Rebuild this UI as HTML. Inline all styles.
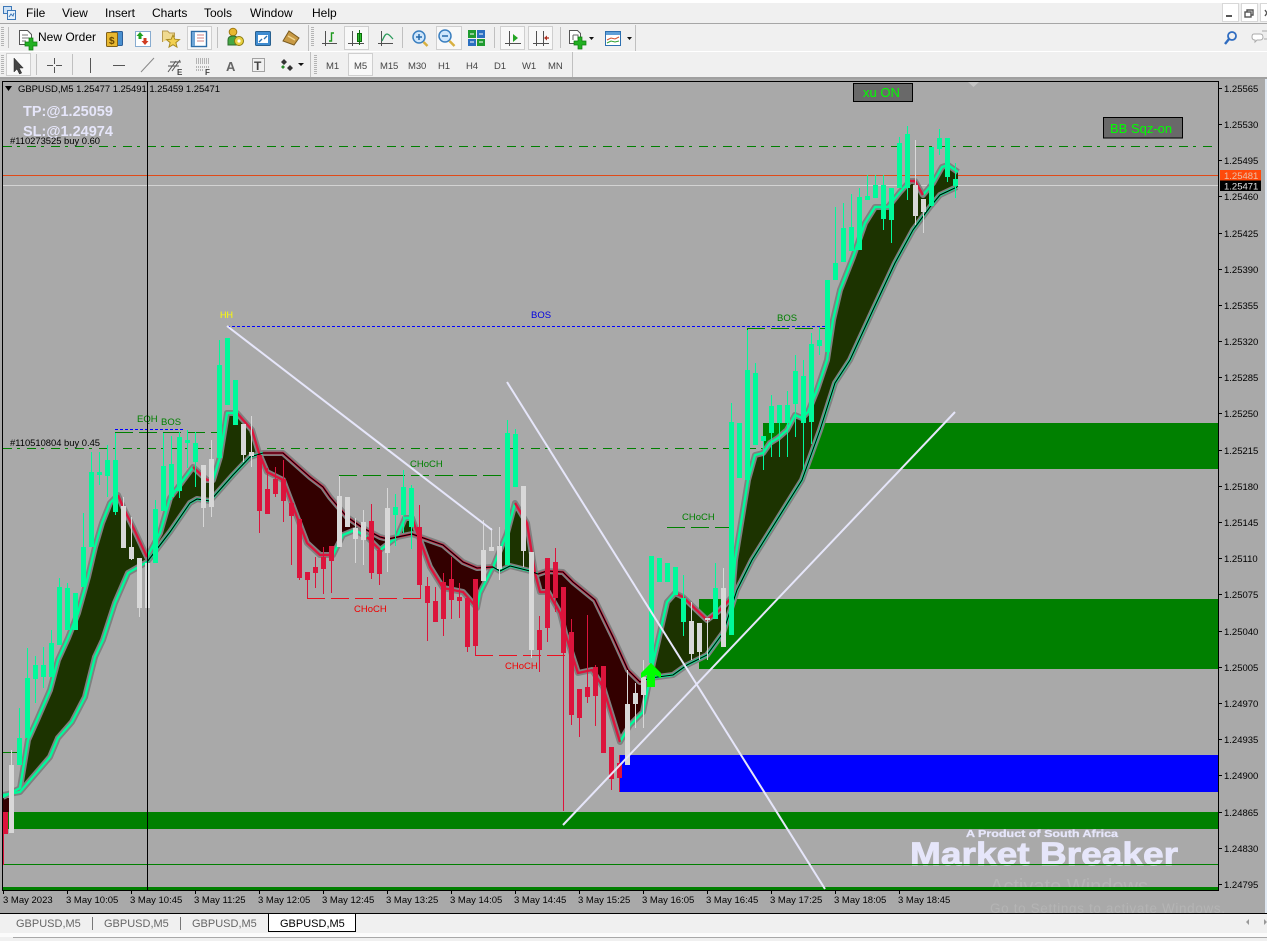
<!DOCTYPE html>
<html><head><meta charset="utf-8"><title>GBPUSD,M5</title>
<style>
html,body{margin:0;padding:0;background:#f0f0f0;width:1267px;height:941px;overflow:hidden}
svg{display:block;position:absolute;left:0;top:0}
text{font-family:"Liberation Sans",Arial,sans-serif}
.m{font-size:12px;fill:#000}
.tf{font-size:9.5px;fill:#444;letter-spacing:-.1px}
.ax{font-size:9.5px;fill:#000}
.tb{font-size:11px;fill:#666}
.g{font-size:9.5px;fill:#008000}
.r{font-size:9.5px;fill:#f00000}
</style></head><body>
<svg width="1267" height="941" viewBox="0 0 1267 941" xmlns="http://www.w3.org/2000/svg">
<defs><clipPath id="c1"><rect x="900" y="870" width="340" height="17"/></clipPath><clipPath id="c2"><rect x="900" y="895" width="340" height="18"/></clipPath></defs>
<!-- chrome -->
<rect width="1267" height="941" fill="#f0f0f0"/>
<rect width="1267" height="3" fill="#fff"/>
<rect y="23" width="1267" height="1" fill="#a6a6a6"/>
<rect y="51" width="1267" height="1" fill="#fff"/>
<rect y="77" width="1267" height="2" fill="#a0a0a0"/>
<rect x="0" y="79" width="1265" height="834" fill="#a9a9a9"/>
<rect x="1265" y="79" width="2" height="834" fill="#dfe8f2"/>
<!-- menu -->
<g fill="none" stroke="#3d78b8"><rect x="3.500" y="6.500" width="8" height="7" fill="#cfe2f5"/><rect x="7.500" y="10.500" width="8" height="9" fill="#e8f2fb"/><path d="M9 17l2-3 2 2 1-3"/></g>
<text class="m" x="26" y="17">File</text><text class="m" x="62" y="17">View</text><text class="m" x="105" y="17">Insert</text><text class="m" x="152" y="17">Charts</text><text class="m" x="204" y="17">Tools</text><text class="m" x="250" y="17">Window</text><text class="m" x="312" y="17">Help</text>
<g fill="#fff" stroke="#d8d8d8"><rect x="1222.500" y="3.500" width="16" height="18"/><rect x="1241.500" y="3.500" width="16" height="18"/><rect x="1260.500" y="3.500" width="10" height="18"/></g>
<rect x="1226" y="15" width="6" height="2" fill="#555"/>
<g fill="none" stroke="#555" stroke-width="1.400"><rect x="1245" y="12" width="6" height="5"/><path d="M1247 12v-2h6v5h-2"/><path d="M1265 10l4 6m0-6l-4 6"/></g>
<!-- grips + separators -->
<g fill="none" stroke="#b4b4b4" stroke-dasharray="1 1"><path d="M0 28.500h4M0 55.500h4" stroke-dasharray="none" opacity="0"/><path d="M2.500 27v20" stroke-width="3"/><path d="M2.500 55v19" stroke-width="3"/><path d="M312.500 27v20" stroke-width="3"/><path d="M315.500 55v19" stroke-width="3"/></g>
<g fill="#c0c0c0"><rect x="8" y="27" width="1" height="21"/><rect x="217" y="27" width="1" height="21"/><rect x="308" y="25" width="1" height="26"/><rect x="402" y="27" width="1" height="21"/><rect x="494" y="27" width="1" height="21"/><rect x="560" y="27" width="1" height="21"/><rect x="635" y="25" width="1" height="26"/><rect x="36" y="54" width="1" height="21"/><rect x="72" y="54" width="1" height="21"/><rect x="310" y="52" width="1" height="25"/><rect x="572" y="52" width="1" height="25"/></g>
<!-- selected boxes -->
<g fill="#f8f8f8" stroke="#cfcfcf"><rect x="187.500" y="26.500" width="24" height="23"/><rect x="344.500" y="26.500" width="24" height="23"/><rect x="436.500" y="26.500" width="25" height="23"/><rect x="500.500" y="26.500" width="24" height="23"/><rect x="528.500" y="26.500" width="24" height="23"/><rect x="6.500" y="53.500" width="24" height="22"/><rect x="348.500" y="53.500" width="24" height="22"/></g>
<!-- new order -->
<path d="M19.500 30.500h8l4 4v10h-12z" fill="#fff" stroke="#555"/><path d="M22 35h6M22 38h7M22 41h4" stroke="#777"/><path d="M25 42h4v-4h4v4h4v4h-4v4h-4v-4h-4z" fill="#22b022" stroke="#0f7a0f" stroke-width=".7"/>
<text class="m" x="38" y="41">New Order</text>
<!-- row-1 icons -->
<rect x="111.500" y="31.500" width="11" height="14" rx="1" fill="#4a90d0" stroke="#2c5f99"/><rect x="106.500" y="32.500" width="11" height="14" rx="1" fill="#e8b830" stroke="#80601a"/><text x="109" y="44" style="font-size:10px;font-weight:bold" fill="#6a4800">$</text>
<rect x="135.500" y="31.500" width="15" height="15" fill="#fff" stroke="#88acd0"/><path d="M140 32l3.500 4h-2v3h-3v-3h-2z" fill="#1fa01f"/><path d="M145 45l-3.500-4h2v-3h3v3h2z" fill="#d03a20"/>
<path d="M162.500 42v-11h5l2 2h5v4" fill="#f0da90" stroke="#b89a50"/><path d="M173 35l1.800 4.200 4.700.4-3.600 3 1.100 4.500-4-2.400-4 2.400 1.100-4.500-3.600-3 4.700-.4z" fill="#f2d050" stroke="#a88a20"/>
<rect x="191.500" y="31.500" width="15" height="15" fill="#fff" stroke="#2e6ea8" stroke-width="1.400"/><rect x="192" y="32" width="3" height="14" fill="#6fa5d6"/><path d="M197 35h7M197 38h7M197 41h7" stroke="#d08080"/>
<circle cx="233" cy="32" r="3.800" fill="#e8b830" stroke="#a07810"/><path d="M228 45v-5c0-3 2-4 5-4 3 0 5 1 5 4v5z" fill="#45a845" stroke="#2a6a2a"/><circle cx="239" cy="41" r="4.500" fill="#e8d040" stroke="#8a7a10"/><circle cx="239" cy="41" r="1.600" fill="#fff"/>
<rect x="255.500" y="31.500" width="15" height="14" rx="1" fill="#3e8bd0" stroke="#28608f"/><rect x="258" y="35" width="10" height="8" fill="#fff"/><path d="M259 42l3-3M267 36l-3 3" stroke="#2a70b0" stroke-width="1.400"/>
<path d="M283 41l6-10 10 7-5 7z" fill="#c89a45" stroke="#7a5b20"/><path d="M288 36l7 4" stroke="#f0d490" stroke-width="1.500"/>
<!-- chart type -->
<g fill="none" stroke="#505050"><path d="M325.500 31v15M322 43.500h15"/><path d="M352.500 31v15M348 43.500h16"/><path d="M381.500 31v15M378 43.500h15"/></g>
<path d="M329 41h2.500v-8H334" fill="none" stroke="#1d9a1d" stroke-width="1.400"/>
<rect x="357.500" y="33.500" width="4" height="8" fill="#30c030" stroke="#0b6b0b"/><path d="M359.500 30v15" stroke="#0b6b0b"/>
<path d="M382 41c2-4 3-7 5-7s4 3 6 5" fill="none" stroke="#2a9a5a" stroke-width="1.300"/>
<circle cx="419" cy="37" r="6" fill="#cfe6fb" stroke="#3a7fc0" stroke-width="1.500"/><path d="M416 37h6M419 34v6" stroke="#2468aa" stroke-width="1.500"/><path d="M423.500 42l4 4" stroke="#d8b040" stroke-width="2.500"/>
<circle cx="445" cy="36" r="6" fill="#cfe6fb" stroke="#3a7fc0" stroke-width="1.500"/><path d="M442 36h6" stroke="#2468aa" stroke-width="1.500"/><path d="M449.500 41l5 5" stroke="#d8b040" stroke-width="2.500"/>
<rect x="468" y="30" width="8" height="8" fill="#1f9b30"/><rect x="477" y="30" width="8" height="8" fill="#2b6fc0"/><rect x="468" y="39" width="8" height="7" fill="#2b6fc0"/><rect x="477" y="39" width="8" height="7" fill="#1f9b30"/><path d="M470 34h4M479 34h4M470 42h4M479 42h4" stroke="#fff"/>
<g fill="none" stroke="#505050"><path d="M509.500 31v15M505 43.500h16"/><path d="M536.500 31v15M533 43.500h16M543.500 31v15"/></g><path d="M513 34l5 4-5 4z" fill="#23a523"/><path d="M545 38h4" stroke="#b03020" stroke-width="1.300"/><path d="M544 38l3-2.500v5z" fill="#b03020"/>
<path d="M569.500 30.500h8l3 3v10h-11z" fill="#fff" stroke="#555"/><path d="M573 35h5v4M573 35v5" stroke="#666" fill="none"/><path d="M574 41h4v-4h4v4h4v4h-4v4h-4v-4h-4z" fill="#22b022" stroke="#0f7a0f" stroke-width=".7"/><path d="M589 37h5l-2.500 3z" fill="#111"/>
<rect x="605.500" y="31.500" width="15" height="14" fill="#fff" stroke="#2c6fb0"/><rect x="606" y="32" width="14" height="3" fill="#5f9fd8"/><path d="M607 40l4-2 4 1 4-2" stroke="#d05030" fill="none"/><path d="M607 43l4-2 4 1 4-1" stroke="#30a030" fill="none"/><path d="M627 37h5l-2.500 3z" fill="#111"/>
<circle cx="1232" cy="36" r="4" fill="none" stroke="#2f6cc0" stroke-width="1.800"/><path d="M1229 39l-4 5" stroke="#2f6cc0" stroke-width="2.400"/>
<path d="M1254 34h6c2 0 3 1 3 3s-1 3-3 3h-3l-2 2v-2c-2 0-3-1-3-3s1-3 2-3z" fill="#fff" stroke="#aaa"/><path d="M1262 31h6v8h-4" fill="#eee" stroke="#aaa"/>
<!-- row-2 icons -->
<path d="M14 58v14l3-3 2.500 5 2.200-1-2.500-5h4z" fill="#444" stroke="#222" stroke-width=".5"/>
<path d="M54.500 58v6M54.500 67v6M47 65.500h6M56 65.500h6" stroke="#555"/>
<path d="M90.500 58v15M113 65.500h12" stroke="#555"/><path d="M141 72l13-14" stroke="#888"/>
<g stroke="#555" fill="none"><path d="M168 72l8-11M172 71l8-11M168 66h11M170 62h11"/></g><text x="177" y="75" style="font-size:8px;font-weight:bold" fill="#444">E</text>
<path d="M196 59h13M196 61h13M196 63h13M196 67h13M196 70h8" stroke="#777" stroke-dasharray="1 1"/><text x="205" y="75" style="font-size:8px;font-weight:bold" fill="#444">F</text>
<text x="226" y="71" style="font-size:13px;font-weight:bold" fill="#666">A</text>
<rect x="252.500" y="58.500" width="12" height="13" fill="none" stroke="#555" stroke-dasharray="1 1"/><text x="254" y="70" style="font-size:12px;font-weight:bold" fill="#444">T</text>
<path d="M284 59l3 3-3 3-3-3zM290 65l3 3-3 3-3-3z" fill="#333"/><path d="M281 67l2 2 2-2-2-2z" fill="#2a8a2a"/><path d="M298 63h6l-3 3z" fill="#111"/>
<text class="tf" x="326" y="69">M1</text><text class="tf" x="354" y="69">M5</text><text class="tf" x="380" y="69">M15</text><text class="tf" x="408" y="69">M30</text><text class="tf" x="438" y="69">H1</text><text class="tf" x="466" y="69">H4</text><text class="tf" x="494" y="69">D1</text><text class="tf" x="522" y="69">W1</text><text class="tf" x="548" y="69">MN</text>

<!-- watermark behind -->
<text x="990" y="893" clip-path="url(#c1)" style="font-size:20px" fill="#b4b4b4" textLength="158">Activate Windows</text>
<text x="990" y="913" clip-path="url(#c2)" style="font-size:13.500px" fill="#b4b4b4" textLength="235">Go to Settings to activate Windows.</text>

<!-- zones -->
<g shape-rendering="crispEdges">
<rect x="3" y="812" width="1215" height="17" fill="#008000"/>
<rect x="3" y="887" width="1215" height="3" fill="#008000"/>
<rect x="763" y="423" width="455" height="46" fill="#008000"/>
<rect x="699" y="599" width="519" height="70" fill="#008000"/>
<rect x="620" y="755" width="598" height="37" fill="#0000ff"/>
<path d="M619.500 755v37" stroke="#dc143c"/>
<path d="M3 864.500h1215" stroke="#008000"/>
<path d="M3 752.500h16" stroke="#008000"/>
<path d="M3 146.500h1210M3 448.500h1215" stroke="#008000" stroke-dasharray="9 5 3 7"/>
<path d="M3 175.500h1215" stroke="#e04a18"/>
<path d="M3 185.500h1215" stroke="#d3d3d3"/>
<!-- structure lines -->
<path d="M115 432.500h103M339 475.500h162M747 328.500h80M667 527.500h64" stroke="#008000" stroke-dasharray="18 6"/>
<path d="M115.500 432v28M339.500 475v21M747.500 328v42" stroke="#008000"/>
<path d="M115 429.500h70M227 326.500h608" stroke="#0000ff" stroke-dasharray="3 2"/>
<path d="M307 598.500h114M475 655.500h90" stroke="#ec1020" stroke-dasharray="18 6"/>
<path d="M307.500 573v25M420.500 527v71M475.500 646v10" stroke="#dc143c"/>
</g>

<!-- band fill -->
<rect x="3" y="798" width="9" height="14" fill="#330000"/>
<g fill="#1c3300">
<polygon points="20,788 28,740 37,720 50,690 58,660 68,638 78,613 88,577 95,547 102,523 110,503 118,495 123,507 133,527 147,557 147,562 128,573 115,603 103,640 95,657 85,697 72,722 58,738 50,757 20,792"/>
<polygon points="147,560 160,533 170,498 193,467 207,480 213,480 220,457 227,413 237,413 252,430 259,453 250,457 233,475 210,501 197,499 190,503 170,532"/>
<polygon points="397,537 405,518 412,518 417,535 412,534"/>
<polygon points="485,568 493,567 507,533 515,503 527,523 535,573 530,571 510,566 500,571"/>
<polygon points="645,680 653,663 667,602 675,593 683,597 707,620 720,610 732,597 735,560 748,480 755,455 763,453 770,443 778,438 787,430 795,415 802,418 808,412 817,390 827,360 833,320 840,290 853,257 865,223 875,207 888,207 900,192 910,181 915,181 923,195 933,183 942,167 948,165 958,172 958,187 940,195 930,207 913,230 895,263 873,310 850,360 835,383 820,430 802,480 752,560 737,590 723,633 707,655 687,665 673,675 650,678"/>
</g>
<g fill="#330000">
<polygon points="259,453 263,453 283,453 310,477 323,487 330,497 347,517 363,528 380,537 388,539 397,537 380,550 367,537 355,530 343,535 333,555 320,555 307,543 297,517 283,480 267,472"/>
<polygon points="417,535 443,545 463,562 477,568 485,568 480,593 477,608 463,592 443,588 430,567 420,540"/>
<polygon points="535,573 547,571 563,572 573,582 595,600 613,637 628,670 640,682 645,680 643,712 630,725 620,742 603,687 592,670 578,673 565,633 560,613 548,592 540,592"/>
</g>
<!-- gray halos -->
<g fill="none" stroke="#808080" stroke-width="6" stroke-linejoin="round">
<polyline points="3,797 20,788 28,740 37,720 50,690 58,660 68,638 78,613 88,577 95,547 102,523 110,503 118,495 123,507 133,527 147,557 160,533 170,498 193,467 207,480 213,480 220,457 227,413 237,413 252,430 259,453 267,472 283,480 297,517 307,543 320,555 333,555 343,535 355,530 367,537 380,550 397,537 405,518 412,518 420,540 430,567 443,588 463,592 477,608 480,593 493,567 507,533 515,503 527,523 535,573 540,592 548,592 560,613 565,633 578,673 592,670 603,687 620,742 630,725 643,712 653,663 667,602 675,593 683,597 707,620 720,610 732,597 735,560 748,480 755,455 763,453 770,443 778,438 787,430 795,415 802,418 808,412 817,390 827,360 833,320 840,290 853,257 865,223 875,207 888,207 900,192 910,181 915,181 923,195 933,183 942,167 948,165 958,172"/>
<polyline points="3,795 20,792 50,757 58,738 72,722 85,697 95,657 103,640 115,603 128,573 147,562 170,532 190,503 197,499 210,501 233,475 250,457 263,453 283,453 310,477 323,487 330,497 347,517 363,528 380,537 388,539 412,534 443,545 463,562 477,568 493,567 500,571 510,566 530,571 538,574 547,571 563,572 573,582 595,600 613,637 628,670 640,682 650,678 673,675 687,665 707,655 723,633 737,590 752,560 802,480 820,430 835,383 850,360 873,310 895,263 913,230 930,207 940,195 957,187"/>
</g>
<!-- coloured lines -->
<g fill="none" stroke-width="2.400" stroke-linejoin="round">
<g stroke="#00fa9a">
<polyline points="3,797 20,788 28,740 37,720 50,690 58,660 68,638 78,613 88,577 95,547 102,523 110,503 118,495"/>
<polyline points="147,557 160,533 170,498 193,467"/>
<polyline points="213,480 220,457 227,413 237,413"/>
<polyline points="333,555 343,535 355,530 367,537"/><polyline points="380,550 397,537 405,518 412,518"/>
<polyline points="477,608 480,593 493,567 507,533 515,503"/>
<polyline points="620,742 630,725 643,712 653,663 667,602 675,593"/>
<polyline points="732,597 735,560 748,480 755,455 763,453 770,443 778,438 787,430 795,415 802,418 808,412 817,390 827,360 833,320 840,290 853,257 865,223 875,207 888,207 900,192 910,181"/>
<polyline points="923,195 933,183 942,167 948,165 958,172"/>
<polyline points="3,795 20,792 50,757 58,738 72,722 85,697 95,657 103,640 115,603 128,573 147,562 170,532 190,503 197,499 210,501 233,475 250,457 263,453"/>
<polyline points="493,567 500,571 510,566 530,571 538,574"/>
<polyline points="645,680 650,678 673,675 687,665 707,655 723,633 737,590 752,560 802,480 820,430 835,383 850,360 873,310 895,263 913,230 930,207 940,195 957,187"/>
</g>
<g stroke="#dc143c">
<polyline points="118,495 123,507 133,527 147,557"/>
<polyline points="193,467 207,480 213,480"/>
<polyline points="237,413 252,430 259,453 267,472 283,480 297,517 307,543 320,555 333,555"/>
<polyline points="367,537 380,550"/>
<polyline points="412,518 420,540 430,567 443,588 463,592 477,608"/>
<polyline points="515,503 527,523 535,573 540,592 548,592 560,613 565,633 578,673 592,670 603,687 620,742"/>
<polyline points="675,593 683,597 707,620 720,610 732,597"/>
<polyline points="910,181 915,181 923,195"/>
<polyline points="263,453 283,453 310,477 323,487 330,497 347,517 363,528 380,537 388,539 412,534 443,545 463,562 477,568 493,567"/>
<polyline points="538,574 547,571 563,572 573,582 595,600 613,637 628,670 640,682 645,680"/>
</g>
</g>
<polyline fill="none" stroke="#000" stroke-width="1.100" points="147,562 170,532 190,503 197,499 210,501 233,475 250,457 263,453 283,453 310,477 323,487 330,497 347,517 363,528 380,537 388,539 412,534 443,545 463,562 477,568 493,567 500,571 510,566 530,571 538,574 547,571 563,572 573,582 595,600 613,637 628,670 640,682 650,678 673,675 687,665 707,655 723,633 737,590 752,560 802,480 820,430 835,383 850,360 873,310 895,263 913,230 930,207 940,195 957,187"/>

<!-- candles: x is candle centre -->
<g fill="none" shape-rendering="crispEdges" transform="translate(.5,0)">
<path stroke="#00fa9a" d="M19 708V765M27 648V678M35 656V703M43 647V688M51 630V643M59 578V587M67 583V590M83 513V547M91 452V472M99 452V485M107 445V497M115 433V515M155 500V510M163 433V466M171 436V500M179 432V498M187 430V468M195 432V487M219 340V365M395 494V546M403 470V533M411 485V549M507 420V433M515 429V434M683 575V636M715 563V588M731 403V422M747 330V370M755 363V373M763 436V470M771 395V457M779 405V457M787 391V457M795 355V437M803 360V470M811 333V444M819 327V355M835 207V263M843 203V228M851 194V227M859 188V197M867 175V196M875 175V185M883 175V230M891 188V243M899 137V143M907 126V200M939 129V155M947 138V182M955 163V198"/>
<path stroke="#d8d8d8" d="M11 750V765M123 497V506M131 517V560M139 558V617M147 517V563M203 465V527M211 440V517M243 424V462M251 416V467M339 476V547M355 518V563M363 510V565M387 488V572M483 520V550M491 528V547M499 527V580M523 486V567M531 552V658M627 670V704M635 683V728M643 660V728M691 602V660M699 623V660M707 618V660M723 568V647M915 140V225M923 199V233"/>
<path stroke="#dc143c" d="M3 834V865M259 511V533M267 468V489M275 467V497M283 460V522M291 516V565M299 578V580M307 580V598M315 557V588M323 547V594M331 561V593M371 504V579M379 574V585M419 505V585M427 577V641M435 587V612M443 573V636M451 557V619M459 583V618M467 598V652M475 579V655M539 616V672M547 558V642M555 548V612M563 587V811M571 619V725M579 689V737M587 615V703M595 665V726M611 747V790M619 763V792"/>
<path stroke="#dc143c" stroke-width="5" d="M5 812V834M259 455V511M267 489V514M275 479V494M283 479V501M291 503V516M299 519V578M307 572V580M315 567V573M323 557V569M331 546V561M371 521V573M379 550V574M419 527V585M427 586V603M435 601V622M443 582V619M451 579V600M459 597V601M467 598V647M475 579V646M539 630V650M547 558V628M555 562V598M563 587V653M571 632V715M579 689V718M587 687V697M595 667V696M603 666V753M611 747V779M619 763V778"/>
<path stroke="#d8d8d8" stroke-width="5" d="M11 765V833M123 506V548M131 547V559M139 558V608M147 563V608M203 465V508M211 459V507M243 424V455M251 452V456M339 496V547M347 497V527M355 528V539M363 522V540M387 508V553M483 550V581M491 547V551M499 546V569M523 486V551M531 552V650M627 704V765M635 693V704M643 677V695M691 621V654M699 623V652M707 618V620M723 588V647M915 185V216M923 199V212"/>
<path stroke="#00fa9a" stroke-width="5" d="M19 738V765M27 678V738M35 665V679M43 665V677M51 643V677M59 587V645M67 588V630M75 593V630M83 547V587M91 472V547M99 472V475M107 460V476M115 460V512M155 509V563M163 466V511M171 464V497M179 437V491M187 440V443M195 443V462M219 365V458M227 338V405M235 380V425M395 507V515M403 487V515M411 488V527M507 433V565M515 434V487M651 556V663M659 558V582M667 563V582M675 567V595M683 598V622M715 588V619M731 422V635M739 423V478M747 370V480M755 373V445M763 436V441M771 406V433M779 405V423M787 405V423M795 371V404M803 376V423M811 344V422M819 340V346M827 280V352M835 263V280M843 228V262M851 227V251M859 197V250M867 196V200M875 185V198M883 185V219M891 188V220M899 143V188M907 134V188M931 147V206M939 138V149M947 138V177M955 179V186"/>
</g>

<!-- trend lines -->
<g stroke="#e6e6fa" stroke-width="2" fill="none">
<path d="M227 326L492 530"/>
<path d="M507 382L825 889"/>
<path d="M563 825L955 412"/>
</g>
<!-- arrow -->
<path d="M651 663L641 673V678L647 675V687H655V675L661 678V673Z" fill="#00ff00"/>

<!-- chart labels -->
<text x="220" y="318" style="font-size:9px" fill="#ffff00">HH</text>
<text class="g" x="137" y="422">EQH</text><text class="g" x="161" y="425">BOS</text>
<text x="531" y="318" style="font-size:9.500px" fill="#0000e0">BOS</text>
<text class="g" x="777" y="321">BOS</text>
<text class="g" x="410" y="467">CHoCH</text>
<text class="g" x="682" y="520">CHoCH</text>
<text class="r" x="354" y="612">CHoCH</text>
<text class="r" x="505" y="669">CHoCH</text>
<path d="M5 86h7l-3.500 5z" fill="#000"/>
<text x="18" y="92" style="font-size:9.500px" fill="#000" textLength="202" lengthAdjust="spacing">GBPUSD,M5  1.25477 1.25491 1.25459 1.25471</text>
<text x="23" y="116" style="font-size:14.500px;font-weight:bold" fill="#e6e6fa">TP:@1.25059</text>
<text x="23" y="136" style="font-size:14.500px;font-weight:bold" fill="#e6e6fa">SL:@1.24974</text>
<text x="10" y="144" style="font-size:9.400px" fill="#000">#110273525 buy 0.60</text>
<text x="10" y="446" style="font-size:9.400px" fill="#000">#110510804 buy 0.45</text>
<!-- buttons -->
<rect x="853.500" y="83.500" width="59" height="18" fill="#696969" stroke="#000"/>
<text x="863" y="97" style="font-size:13px" fill="#00ff00">xu ON</text>
<rect x="1103.500" y="117.500" width="79" height="20.500" fill="#696969" stroke="#000"/>
<text x="1110" y="133" style="font-size:13px" fill="#00ff00">BB Sqz-on</text>
<path d="M968 82h11l-5.500 5z" fill="#c4c4c4"/>
<!-- logo text -->
<text x="966" y="837" style="font-size:10.500px;font-weight:bold" fill="#e6e6fa" stroke="#e6e6fa" stroke-width=".3" textLength="152" lengthAdjust="spacingAndGlyphs">A Product of South Africa</text>
<text x="910" y="865" style="font-size:32px;font-weight:bold" fill="#e6e6fa" stroke="#e6e6fa" stroke-width=".8" textLength="268" lengthAdjust="spacingAndGlyphs">Market Breaker</text>
<path d="M910 864.500h308" stroke="#008000" shape-rendering="crispEdges"/>

<!-- frame -->
<g fill="#000" shape-rendering="crispEdges">
<rect x="2" y="81" width="1217" height="1"/>
<rect x="2" y="81" width="1" height="809"/>
<rect x="1218" y="81" width="1" height="809"/>
<rect x="2" y="890" width="1217" height="1"/>
<rect x="147" y="81" width="1" height="809"/>
</g>
<!-- price axis -->
<g fill="#000" shape-rendering="crispEdges">
<path stroke="#000" d="M1218 88.500h4M1218 124.500h4M1218 160.500h4M1218 196.500h4M1218 233.500h4M1218 269.500h4M1218 305.500h4M1218 341.500h4M1218 377.500h4M1218 413.500h4M1218 450.500h4M1218 486.500h4M1218 522.500h4M1218 558.500h4M1218 594.500h4M1218 631.500h4M1218 667.500h4M1218 703.500h4M1218 739.500h4M1218 775.500h4M1218 812.500h4M1218 848.500h4M1218 884.500h4"/>
<path stroke="#000" d="M3.500 890v4M67.500 890v4M131.500 890v4M195.500 890v4M259.500 890v4M323.500 890v4M387.500 890v4M451.500 890v4M515.500 890v4M579.500 890v4M643.500 890v4M707.500 890v4M771.500 890v4M835.500 890v4M899.500 890v4"/>
</g>
<g>
<text class="ax" x="1224" y="92">1.25565</text><text class="ax" x="1224" y="128">1.25530</text><text class="ax" x="1224" y="164">1.25495</text><text class="ax" x="1224" y="200">1.25460</text><text class="ax" x="1224" y="237">1.25425</text><text class="ax" x="1224" y="273">1.25390</text><text class="ax" x="1224" y="309">1.25355</text><text class="ax" x="1224" y="345">1.25320</text><text class="ax" x="1224" y="381">1.25285</text><text class="ax" x="1224" y="417">1.25250</text><text class="ax" x="1224" y="454">1.25215</text><text class="ax" x="1224" y="490">1.25180</text><text class="ax" x="1224" y="526">1.25145</text><text class="ax" x="1224" y="562">1.25110</text><text class="ax" x="1224" y="598">1.25075</text><text class="ax" x="1224" y="635">1.25040</text><text class="ax" x="1224" y="671">1.25005</text><text class="ax" x="1224" y="707">1.24970</text><text class="ax" x="1224" y="743">1.24935</text><text class="ax" x="1224" y="779">1.24900</text><text class="ax" x="1224" y="816">1.24865</text><text class="ax" x="1224" y="852">1.24830</text><text class="ax" x="1224" y="888">1.24795</text>
</g>
<rect x="1220" y="170" width="41" height="10.500" fill="#ff4a0a"/>
<text x="1224" y="179" style="font-size:9.500px" fill="#e8c0a8">1.25481</text>
<rect x="1220" y="180.500" width="41" height="10.500" fill="#000"/>
<text x="1224" y="189.500" style="font-size:9.500px" fill="#e0e0e0">1.25471</text>
<text class="ax" x="3" y="903">3 May 2023</text><text class="ax" x="66" y="903">3 May 10:05</text><text class="ax" x="130" y="903">3 May 10:45</text><text class="ax" x="194" y="903">3 May 11:25</text><text class="ax" x="258" y="903">3 May 12:05</text><text class="ax" x="322" y="903">3 May 12:45</text><text class="ax" x="386" y="903">3 May 13:25</text><text class="ax" x="450" y="903">3 May 14:05</text><text class="ax" x="514" y="903">3 May 14:45</text><text class="ax" x="578" y="903">3 May 15:25</text><text class="ax" x="642" y="903">3 May 16:05</text><text class="ax" x="706" y="903">3 May 16:45</text><text class="ax" x="770" y="903">3 May 17:25</text><text class="ax" x="834" y="903">3 May 18:05</text><text class="ax" x="898" y="903">3 May 18:45</text>

<!-- tab bar -->
<rect x="0" y="913" width="1267" height="28" fill="#f0f0f0"/>
<rect x="0" y="913" width="1267" height="1" fill="#000"/>
<rect x="0" y="933" width="1267" height="4" fill="#fbfbfb"/>
<rect x="13" y="937" width="1254" height="1" fill="#a8a8a8"/>
<path d="M268.500 931.500v-18h87v18z" fill="#fff" stroke="#000"/>
<rect x="269" y="913" width="86" height="1" fill="#000"/>
<path d="M92.500 917v13M180.500 917v13" stroke="#777"/>
<text class="tb" x="16" y="927">GBPUSD,M5</text><text class="tb" x="104" y="927">GBPUSD,M5</text><text class="tb" x="192" y="927">GBPUSD,M5</text>
<text x="280" y="927" style="font-size:11px" fill="#000">GBPUSD,M5</text>
<path d="M1249 919v6l-3-3zM1264 919v6l3-3z" fill="#999"/>
</svg>
</body></html>
